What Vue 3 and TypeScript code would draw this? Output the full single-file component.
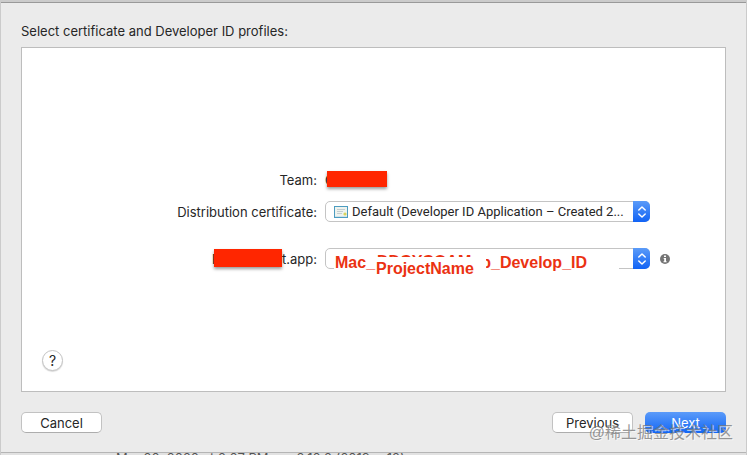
<script setup lang="ts">
import { ref } from 'vue'

const certificate = ref('default')
const profile = ref('develop')
</script>

<template>
  <div class="window">
    <main class="sheet">
      <h1 class="title">Select certificate and Developer ID profiles:</h1>

      <section class="panel">
        <div class="form">
          <span class="label">Team:</span>
          <span class="value team">C<span class="redact redact-team"></span></span>

          <label class="label" for="certificate">Distribution certificate:</label>
          <div class="popup">
            <select id="certificate" v-model="certificate" class="with-icon">
              <option value="default">Default (Developer ID Application – Created 2...</option>
            </select>
            <svg class="cert" width="14" height="12" viewBox="0 0 14 12">
              <rect x="0.5" y="0.5" width="13" height="11" fill="#eef3ee" stroke="#4c9cc0" />
              <path d="M3 3.5h8M3 5.5h6M3 7.5h5" stroke="#c3cdd0" />
              <path d="M1 10.5h12" stroke="#cfe3ea" />
              <circle cx="11" cy="8" r="1.6" fill="#d8d45c" />
            </svg>
            <span class="stepper">
              <svg width="10" height="14" viewBox="0 0 10 14">
                <path d="M1.8 5 5 2l3.2 3M1.8 9 5 12l3.2-3" />
              </svg>
            </span>
          </div>

          <label class="label app" for="profile"><span class="hidden-name"><span class="initial">P</span><span class="redact redact-app"></span></span>t.app:</label>
          <div class="row">
            <div class="popup">
              <select id="profile" v-model="profile" aria-label="Provisioning profile">
                <option value="develop"></option>
              </select>
              <span class="patch"></span>
              <span class="note note-start">Mac_</span>
              <span class="note note-under">DDCYCOAM</span>
              <span class="note note-end"><span class="cut">p</span>_Develop_ID</span>
              <span class="note note-project">ProjectName</span>
              <span class="stepper">
                <svg width="10" height="14" viewBox="0 0 10 14">
                  <path d="M1.8 5 5 2l3.2 3M1.8 9 5 12l3.2-3" />
                </svg>
              </span>
            </div>
            <button class="info" type="button" aria-label="Information">
              <svg width="10" height="10" viewBox="0 0 10 10">
                <circle cx="5" cy="5" r="5" fill="#757575" />
                <path d="M4 1.6h2v1.5H4zM3.7 4H6v3.2h.6v1H3.5v-1h.7V5h-.5z" fill="#fff" />
              </svg>
            </button>
          </div>
        </div>
        <button class="help" type="button" aria-label="Help">?</button>
      </section>

      <footer class="actions">
        <button class="button" type="button">Cancel</button>
        <button class="button push" type="button">Previous</button>
        <button class="button primary" type="button">Next</button>
        <span class="watermark">@稀土掘金技术社区</span>
      </footer>
    </main>
    <div class="behind"><span>Mar 20, 2020 at 2:07 PM</span><span>2.10.2 (2019xx.12)</span></div>
  </div>
</template>

<style>
body {
  margin: 0;
}
</style>

<style scoped>
.window {
  box-sizing: border-box;
  display: flex;
  flex-direction: column;
  height: 100vh;
  padding: 2px 1px 0;
  overflow: hidden;
  background: #cbcbcb;
  color: #262626;
  font: 13px/16px Inter, "Liberation Sans", sans-serif;
}

.sheet {
  display: flex;
  flex: 1;
  flex-direction: column;
  box-sizing: border-box;
  padding: 20px 20px 19px;
  border-top: 1px solid #999;
  border-bottom: 1px solid #b5b5b5;
  background: #ebebeb;
}

.title {
  margin: 0 0 8px;
  font-size: 13px;
  font-weight: 400;
  line-height: 16px;
}

.panel {
  display: flex;
  flex: 1;
  flex-direction: column;
  padding: 121px 0 20px;
  border: 1px solid #bdbdbd;
  background: #fff;
}

.form {
  display: grid;
  grid-template-columns: 59fr 80fr;
  grid-template-rows: 22px 21px auto;
  gap: 10px 8px;
  align-items: center;
}

.label {
  text-align: right;
  white-space: nowrap;
}

.app,
.row {
  margin-top: 16px;
}

.row {
  display: flex;
  align-items: center;
  gap: 10px;
}

.team {
  position: relative;
}

.redact {
  position: absolute;
  background: #ff2600;
  box-shadow: 0 2px 3px rgba(0, 0, 0, 0.4);
}

.redact-team {
  top: -1px;
  left: 2px;
  width: 60px;
  height: 16px;
}

.hidden-name {
  display: inline-block;
  position: relative;
  width: 70px;
  text-align: left;
}

.redact-app {
  top: -2px;
  left: 2px;
  width: 68px;
  height: 18px;
}

.popup {
  position: relative;
  width: 325px;
  height: 21px;
}

select {
  box-sizing: border-box;
  width: 100%;
  height: 21px;
  padding: 0 18px 0 8px;
  border: 1px solid #c4c4c4;
  border-radius: 5px;
  appearance: none;
  background: #fff;
  color: #262626;
  font: 13px/16px Roboto, "Liberation Sans", sans-serif;
}

.with-icon {
  padding-left: 26px;
}

.cert {
  position: absolute;
  top: 5px;
  left: 9px;
}

.stepper {
  display: flex;
  position: absolute;
  top: 0;
  right: 0;
  align-items: center;
  justify-content: center;
  width: 17px;
  height: 21px;
  border-radius: 0 5px 5px 0;
  background: linear-gradient(#5b9bf8, #1163f5);
  pointer-events: none;
}

.stepper path {
  fill: none;
  stroke: #fff;
  stroke-linecap: round;
  stroke-linejoin: round;
  stroke-width: 1.5;
}

.patch {
  position: absolute;
  top: 3px;
  left: 9px;
  width: 285px;
  height: 20px;
  background: #fff;
}

.note {
  position: absolute;
  color: #eb3212;
  font: bold 16px/18px "Liberation Sans", sans-serif;
}

.note-start {
  top: 6px;
  left: 10px;
}

.note-under {
  top: 5px;
  left: 52px;
  height: 4px;
  overflow: hidden;
}

.note-end {
  display: flex;
  top: 6px;
  left: 161px;
}

.cut {
  display: flex;
  justify-content: flex-end;
  width: 5px;
  overflow: hidden;
}

.note-project {
  top: 12px;
  left: 51px;
}

.info {
  display: flex;
  padding: 0;
  border: 0;
  background: none;
}

.help {
  width: 21px;
  height: 21px;
  margin: auto 0 0 20px;
  padding: 0;
  border: 1px solid #c4c4c4;
  border-radius: 50%;
  background: #fff;
  box-shadow: 0 1px 1px rgba(0, 0, 0, 0.15);
  color: #262626;
  font: 14px/18px Inter, sans-serif;
}

.actions {
  display: flex;
  position: relative;
  gap: 12px;
  margin-top: 20px;
}

.button {
  box-sizing: border-box;
  width: 81px;
  height: 21px;
  padding: 0;
  border: 1px solid #c2c2c2;
  border-bottom-color: #adadad;
  border-radius: 5px;
  background: #fff;
  color: #262626;
  font: inherit;
}

.push {
  margin-left: auto;
}

.primary {
  border: 0;
  background: linear-gradient(#5b9bf9, #1266f5);
  color: #fff;
}

.watermark {
  position: absolute;
  top: 9px;
  right: -7px;
  color: rgba(120, 120, 120, 0.75);
  font: 16px/24px "Liberation Sans", "Noto Sans CJK SC", sans-serif;
  text-shadow: 1px 1px 0 rgba(255, 255, 255, 0.6);
  pointer-events: none;
  white-space: nowrap;
}

.behind {
  display: flex;
  gap: 28px;
  height: 2px;
  padding-left: 115px;
  overflow: hidden;
  background: #e2e2e2;
  color: #555;
  line-height: 10px;
}
</style>
